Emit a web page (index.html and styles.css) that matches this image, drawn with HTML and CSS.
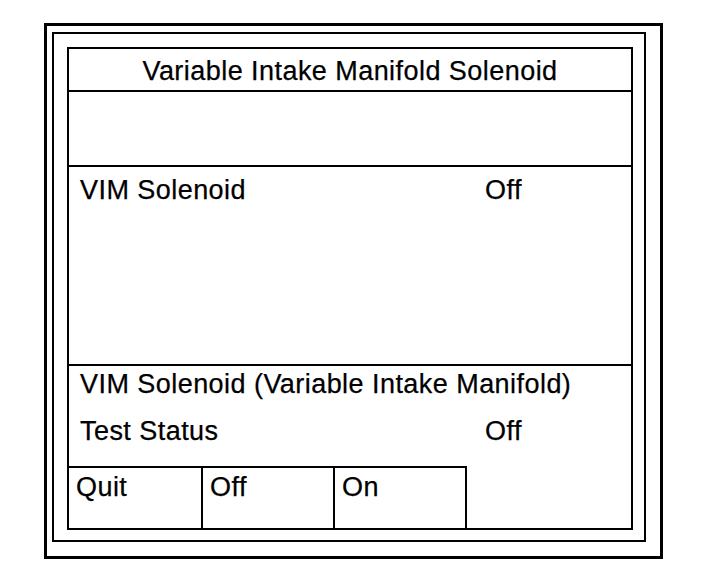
FILE: index.html
```html
<!DOCTYPE html>
<html lang="en">
<head>
    <meta charset="UTF-8">
    <meta name="viewport" content="width=device-width, initial-scale=1.0">
    <title>Variable Intake Manifold Solenoid</title>
    <link rel="stylesheet" href="styles.css">
</head>
<body>

<div class="frame">
    <div class="frame-inner">
        <div class="screen">
            <div class="title">Variable Intake Manifold Solenoid</div>
            <div class="blank"></div>

            <div class="data">
                <div class="row">
                    <span class="label">VIM Solenoid</span>
                    <span class="value">Off</span>
                </div>
            </div>

            <div class="status">
                <div class="row">
                    <span class="label">VIM Solenoid (Variable Intake Manifold)</span>
                </div>
                <div class="row">
                    <span class="label">Test Status</span>
                    <span class="value">Off</span>
                </div>
            </div>

            <div class="keys">
                <div class="key">Quit</div>
                <div class="key">Off</div>
                <div class="key">On</div>
            </div>
        </div>
    </div>
</div>

</body>
</html>
```

FILE: styles.css
```css
body {
    margin: 0;
    background-color: #fff;
    color: #000;
    font-family: "Liberation Sans", Arial, sans-serif;
    font-size: 27px;
    letter-spacing: 0.45px;
    -webkit-text-stroke: 0.25px #000;
}

.frame {
    box-sizing: border-box;
    width: 619px;
    height: 536px;
    margin: 23px 0 0 44px;
    padding: 6px 14px 14px 5px;
    border: 3px solid #000;
}

.frame-inner {
    box-sizing: border-box;
    width: 594px;
    height: 510px;
    padding: 13px 11px 10px 13px;
    border: 2px solid #000;
}

.screen {
    box-sizing: border-box;
    width: 566px;
    height: 483px;
    border: 2px solid #000;
    display: flex;
    flex-direction: column;
}

.title {
    height: 37px;
    padding-top: 4px;
    line-height: 37px;
    text-align: center;
    border-bottom: 2px solid #000;
}

.blank {
    height: 73px;
    border-bottom: 2px solid #000;
}

.data {
    box-sizing: border-box;
    height: 199px;
    padding-top: 8px;
    border-bottom: 2px solid #000;
}

.status {
    box-sizing: border-box;
    height: 100px;
    padding-top: 3px;
    display: flex;
    flex-direction: column;
    gap: 17px;
}

.row {
    display: flex;
    line-height: 30px;
    padding-left: 11px;
}

.label {
    width: 405px;
    white-space: nowrap;
}

.keys {
    display: flex;
    flex: 1;
}

.key {
    box-sizing: border-box;
    width: 132px;
    padding: 4px 0 0 7px;
    line-height: 30px;
    border-top: 2px solid #000;
    border-right: 2px solid #000;
}

.key:first-child {
    width: 134px;
}
```
